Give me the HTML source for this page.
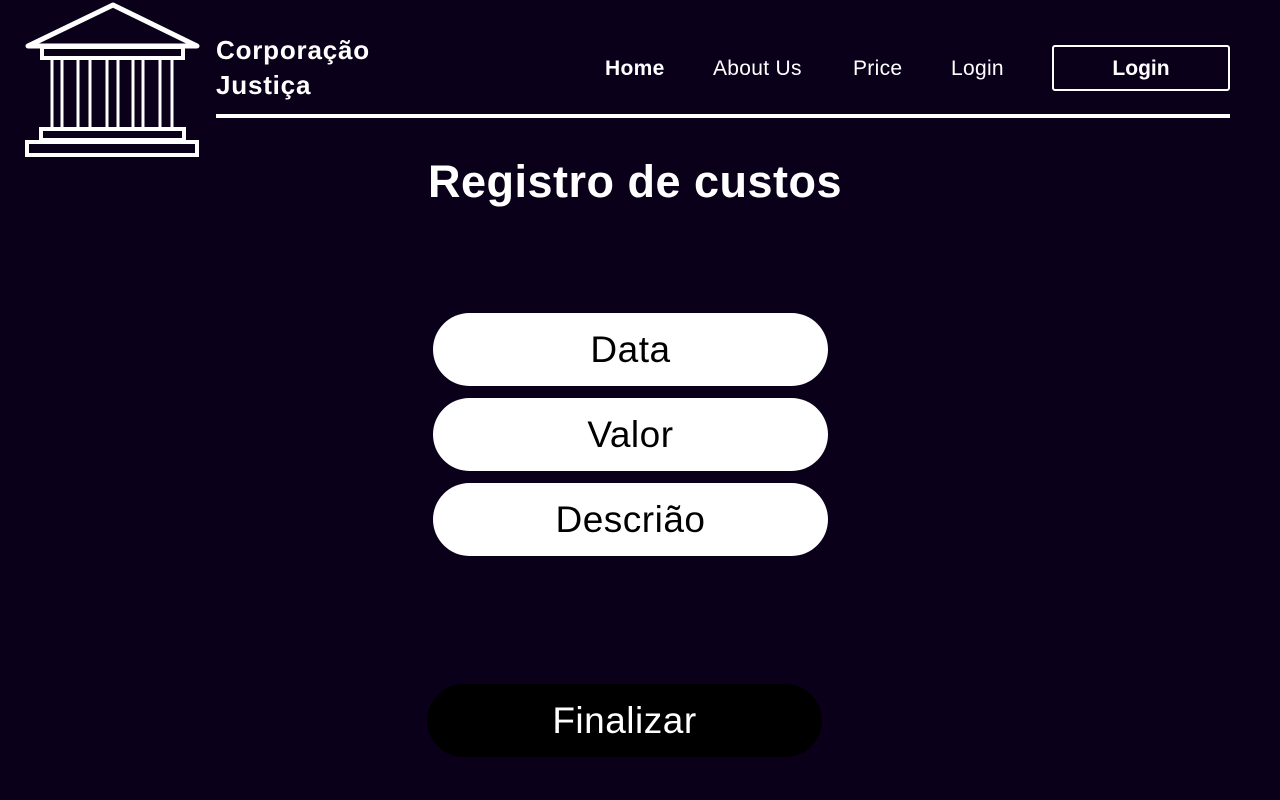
<!DOCTYPE html>
<html><head><meta charset="utf-8"><style>
body{margin:0;width:1280px;height:800px;background:#0b0019;font-family:"Liberation Sans",sans-serif;color:#fff;position:relative;overflow:hidden}
.a{position:absolute}
.nav{top:57px;font-size:21px;letter-spacing:0.3px}
.pill{position:absolute;left:433px;width:395px;height:73px;border-radius:37px;background:#fff;color:#000;font-size:37px;letter-spacing:0.5px;text-align:center;line-height:73px}
</style></head><body>
<svg class="a" style="left:0;top:0" width="210" height="165" viewBox="0 0 210 165" fill="none" stroke="#fff" stroke-width="5">
<path d="M28 46 L113 5 L197 46 Z" stroke-linejoin="round"/>
<rect x="42" y="47" width="141" height="11" stroke-width="4"/>
<path d="M52 58V128M62 58V128M78 58V128M90 58V128M107 58V128M118 58V128M133 58V128M143 58V128M160 58V128M172 58V128" stroke-width="3"/>
<rect x="41" y="129" width="143" height="11" stroke-width="4"/>
<rect x="27" y="142" width="170" height="13" stroke-width="4"/>
</svg>
<div class="a" style="left:216px;top:33px;font-size:26px;letter-spacing:0.8px;font-weight:bold;line-height:35px">Corporação<br>Justiça</div>
<div class="a" style="left:216px;top:114px;width:1014px;height:4px;background:#fff"></div>
<div class="a nav" style="left:605px;font-weight:bold">Home</div>
<div class="a nav" style="left:713px">About Us</div>
<div class="a nav" style="left:853px">Price</div>
<div class="a nav" style="left:951px">Login</div>
<div class="a" style="left:1052px;top:45px;width:174px;height:42px;border:2px solid #fff;border-radius:3px;text-align:center;line-height:44px;font-size:21px;font-weight:bold">Login</div>
<div class="a" style="left:0;width:1270px;top:156px;text-align:center;font-size:45px;letter-spacing:0.5px;font-weight:bold">Registro de custos</div>
<div class="pill" style="top:313px">Data</div>
<div class="pill" style="top:398px">Valor</div>
<div class="pill" style="top:483px">Descrião</div>
<div class="pill" style="top:684px;left:427px;background:#000;color:#fff">Finalizar</div>
</body></html>
